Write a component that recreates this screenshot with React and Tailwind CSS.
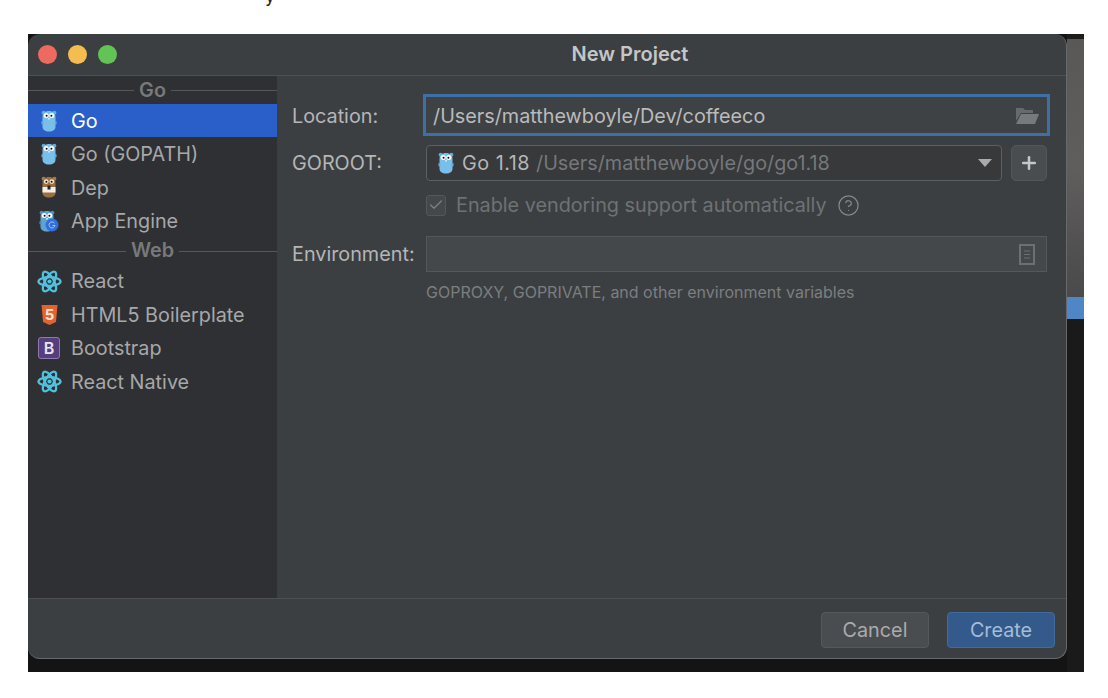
import { Check, CircleHelp, Plus } from 'lucide-react';

function Gopher({ body = '#78bfe9', ear = '#62abd8', size = 'w-4 h-[22px]' }) {
  return (
    <svg viewBox="0 0 16 22" className={`${size} shrink-0`}>
      <circle cx="2.600" cy="2.800" r="2" fill={ear} />
      <circle cx="13.400" cy="2.800" r="2" fill={ear} />
      <path d="M1.500 7c0-4 2.800-6 6.500-6s6.500 2 6.500 6v9.500c0 3.300-2.600 5-6.500 5s-6.500-1.700-6.500-5z" fill={body} />
      <rect x="0.400" y="11" width="2" height="3.500" rx="1" fill={ear} />
      <rect x="13.600" y="11" width="2" height="3.500" rx="1" fill={ear} />
      <circle cx="5.200" cy="5.600" r="2.500" fill="#fff" />
      <circle cx="10.800" cy="5.600" r="2.500" fill="#fff" />
      <circle cx="5.600" cy="5.800" r="1" fill="#111" />
      <circle cx="10.400" cy="5.800" r="1" fill="#111" />
      <rect x="7" y="8" width="2" height="1.600" rx="0.500" fill="#d9e8ef" />
    </svg>
  );
}

function DepIcon() {
  return (
    <svg viewBox="0 0 16 22" className="w-4 h-[22px] shrink-0">
      <circle cx="2.600" cy="2.800" r="2" fill="#a67c4e" />
      <circle cx="13.400" cy="2.800" r="2" fill="#a67c4e" />
      <path d="M1.500 7c0-4 2.800-6 6.500-6s6.500 2 6.500 6v9.500c0 3.300-2.600 5-6.500 5s-6.500-1.700-6.500-5z" fill="#9a6f42" />
      <circle cx="5.200" cy="5.600" r="2.400" fill="#f3e6c8" />
      <circle cx="10.800" cy="5.600" r="2.400" fill="#f3e6c8" />
      <circle cx="5.400" cy="5.800" r="1" fill="#111" />
      <circle cx="10.600" cy="5.800" r="1" fill="#111" />
      <path d="M1.500 11h13v5.500h-13z" fill="#f2efe6" />
      <path d="M6.500 9.500h3v4h-3z" fill="#2b2320" />
    </svg>
  );
}

function AppEngineIcon() {
  return (
    <div className="relative w-5 h-[22px] shrink-0">
      <Gopher body="#5fa4d0" ear="#4d8ab0" />
      <svg viewBox="0 0 14 14" className="absolute right-0 bottom-0 w-[14px] h-[14px]">
        <circle cx="7" cy="7" r="6.500" fill="#2f6fe0" />
        <path d="M9.500 5.200A3 3 0 1 0 10 7.500H7.500" fill="none" stroke="#a8c8f5" strokeWidth="1" />
      </svg>
    </div>
  );
}

function ReactIcon() {
  return (
    <svg viewBox="0 0 26 26" className="w-[25px] h-[25px] shrink-0 -mx-1" fill="none" stroke="#53c1de" strokeWidth="2.300">
      <ellipse cx="13" cy="13" rx="11.500" ry="4.500" />
      <ellipse cx="13" cy="13" rx="11.500" ry="4.500" transform="rotate(60 13 13)" />
      <ellipse cx="13" cy="13" rx="11.500" ry="4.500" transform="rotate(120 13 13)" />
      <circle cx="13" cy="13" r="2.200" fill="#53c1de" stroke="none" />
    </svg>
  );
}

function Html5Icon() {
  return (
    <svg viewBox="0 0 17 22" className="w-[17px] h-[22px] shrink-0">
      <path d="M0.500 1h16l-1.500 17L8.500 21l-6.500-3z" fill="#e4622f" />
      <text x="8.500" y="16" textAnchor="middle" fontSize="15" fontWeight="700" fontFamily="Inter, sans-serif" fill="#fbe3d6">5</text>
    </svg>
  );
}

function BootstrapIcon() {
  return (
    <div className="w-[22px] h-[22px] shrink-0 -mx-[3px] rounded-[3px] border border-[#8d7ab0] bg-[#563d7c] flex items-center justify-center text-[16px] leading-none font-semibold text-[#e8e3ef]">
      B
    </div>
  );
}

function SectionHeader({ label }) {
  return (
    <div className="flex items-center h-[27px]">
      <div className="flex-1 h-px bg-[#55575a]" />
      <span className="px-[5px] text-[19.8px] leading-none font-semibold text-[#77797b]">{label}</span>
      <div className="flex-1 h-px bg-[#55575a]" />
    </div>
  );
}

function SidebarItem({ icon, label, selected }) {
  return (
    <div className={`flex items-center h-[33.4px] pl-[13px] gap-[14px] text-[19.8px] ${selected ? 'bg-[#2a5fc9] text-white' : 'text-[#a6a8aa]'}`}>
      <div className="w-4 flex items-center justify-center">{icon}</div>
      <span className="pt-[2px]">{label}</span>
    </div>
  );
}

function FolderIcon() {
  return (
    <svg viewBox="0 0 24 17" className="w-6 h-[17px]">
      <path d="M1 1h7l2 2h8v3H6L1 14z" fill="#666a6c" />
      <path d="M6 7h18l-4 10H1z" fill="#767a7c" />
    </svg>
  );
}

function DocIcon() {
  return (
    <svg viewBox="0 0 16 21" className="w-4 h-[21px]" fill="none" stroke="#6c7072">
      <rect x="1" y="1" width="14" height="19" strokeWidth="2" />
      <path d="M5 7h6M5 10.500h6M5 14h6" strokeWidth="1.200" />
    </svg>
  );
}

export default function App() {
  return (
    <div className="relative w-[1108px] h-[698px] bg-white pt-[34px] pl-[28px] overflow-hidden font-['Inter',sans-serif]">
      <span className="absolute left-[265px] -top-[14px] text-[18px] leading-[20px] text-[#222]">y</span>
      <div className="flex w-[1056px] h-[638px] bg-[#141414]">
        {/* dialog */}
        <div className="flex flex-col w-[1039px] h-[625px] rounded-xl overflow-hidden bg-[#3c3f41] border border-t-0 border-l-0 border-[#67696a]">
          <div className="relative flex items-center h-[42px] shrink-0 pl-[10px] gap-[11px] border-b border-[#4d4f51]">
            <div className="w-[19px] h-[19px] rounded-full bg-[#ee6a5f]" />
            <div className="w-[19px] h-[19px] rounded-full bg-[#f5bd4f]" />
            <div className="w-[19px] h-[19px] rounded-full bg-[#61c454]" />
            <div className="absolute inset-0 flex items-center justify-center pl-[166px] pb-[2px] text-[20px] font-semibold text-[#c4c6c7]">New Project</div>
          </div>

          <div className="flex flex-1 min-h-0">
            <div className="w-[249px] shrink-0 bg-[#2f3033] pt-px">
              <SectionHeader label="Go" />
              <SidebarItem selected icon={<Gopher />} label="Go" />
              <SidebarItem icon={<Gopher />} label="Go (GOPATH)" />
              <SidebarItem icon={<DepIcon />} label="Dep" />
              <SidebarItem icon={<AppEngineIcon />} label="App Engine" />
              <SectionHeader label="Web" />
              <SidebarItem icon={<ReactIcon />} label="React" />
              <SidebarItem icon={<Html5Icon />} label="HTML5 Boilerplate" />
              <SidebarItem icon={<BootstrapIcon />} label="Bootstrap" />
              <SidebarItem icon={<ReactIcon />} label="React Native" />
            </div>

            <div className="flex-1 pt-[18px] pl-[15px] text-[19.8px] text-[#b4b6b8]">
              <div className="flex items-center h-[42px]">
                <span className="w-[131px] pt-[3px]">Location:</span>
                <div className="flex items-center justify-between w-[627px] h-[42px] border-[3px] border-[#3f70a3] bg-[#3f4244] pl-[7px] pr-[8px] text-[#b9bbbd]">
                  <span className="pt-[3px]">/Users/matthewboyle/Dev/coffeeco</span>
                  <FolderIcon />
                </div>
              </div>

              <div className="flex items-center h-[36px] mt-[9px]">
                <span className="w-[134px] pt-[2px]">GOROOT:</span>
                <div className="flex items-center w-[576px] h-[36px] rounded-[4px] border border-[#5d6062] bg-[#37393b] pl-[11px] pr-[9px]">
                  <Gopher />
                  <span className="ml-[8px] pt-[2px] text-[#b4b6b8] tracking-[0.5px]">Go 1.18</span>
                  <span className="ml-[6px] pt-[2px] text-[#75787a]">/Users/matthewboyle/go/go1.18</span>
                  <svg viewBox="0 0 14 8" className="ml-auto w-[14px] h-2">
                    <path d="M0 0h14L7 8z" fill="#a9abad" />
                  </svg>
                </div>
                <div className="flex items-center justify-center w-9 h-9 ml-[9px] rounded-[5px] border border-[#54575a] bg-[#4a4d50] text-[#c4c6c8]">
                  <Plus size={20} strokeWidth={3} />
                </div>
              </div>

              <div className="flex items-center h-[22px] mt-[13px] ml-[134px] text-[#6f7274]">
                <div className="flex items-center justify-center w-5 h-[21px] rounded-[3px] border border-[#55585a] bg-[#45484a]">
                  <Check size={16} strokeWidth={2} className="text-[#7d8082]" />
                </div>
                <span className="ml-[10px] pt-[2px]">Enable vendoring support automatically</span>
                <CircleHelp size={23} strokeWidth={1.300} className="ml-[10px] text-[#85888a]" />
              </div>

              <div className="flex items-center h-[36px] mt-[20px]">
                <span className="w-[134px] pt-[2px]">Environment:</span>
                <div className="flex items-center justify-end w-[621px] h-[36px] border border-[#55585a] bg-[#45484a] pr-[11px]">
                  <DocIcon />
                </div>
              </div>

              <p className="mt-[8px] ml-[134px] text-[16px] text-[#7b7e80]">GOPROXY, GOPRIVATE, and other environment variables</p>
            </div>
          </div>

          <div className="flex items-start justify-end h-[60px] shrink-0 gap-[18px] pt-[13px] pr-[11px] border-t border-[#4d4f51] text-[19.8px]">
            <div className="flex items-center justify-center w-[108px] h-[36px] pt-[2px] rounded-[4px] border border-[#56595b] bg-[#4a4d4f] text-[#a9abad]">Cancel</div>
            <div className="flex items-center justify-center w-[108px] h-[36px] pt-[2px] rounded-[4px] border border-[#3f6c9b] bg-[#345a8b] text-[#a5bdd6]">Create</div>
          </div>
        </div>

        {/* window behind the dialog */}
        <div className="flex-1 h-full flex flex-col">
          <div className="h-[5px] bg-[#1c1c1c]" />
          <div className="h-[258px] bg-gradient-to-b from-[#5a5757] via-[#605d5d] to-[#4a4a4a]" />
          <div className="h-[22px] bg-[#4f86c6]" />
          <div className="flex-1 bg-[#1a1a1a]" />
        </div>
      </div>
    </div>
  );
}
